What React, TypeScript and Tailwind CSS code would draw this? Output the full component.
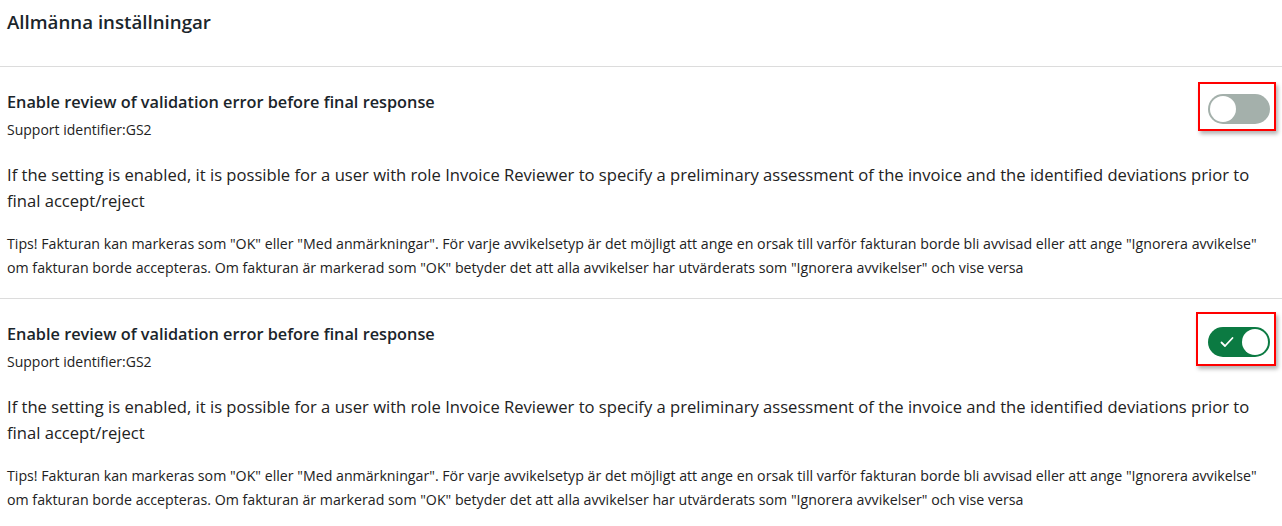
import React from "react";

const Toggle = ({ on }: { on: boolean }) => (
  <div
    className={
      on
        ? "flex h-[30px] w-[62px] items-center justify-between rounded-full bg-[#0b7a42] pl-[12px] pr-[2px]"
        : "flex h-[30px] w-[62px] items-center rounded-full bg-[#a4b0ab] pl-[2px]"
    }
  >
    {on && (
      <svg width="14" height="12" viewBox="0 0 14 12" fill="none">
        <path d="M1.5 6.5 L5 10 L12.5 2" stroke="white" strokeWidth="1.8" strokeLinecap="round" strokeLinejoin="round" />
      </svg>
    )}
    <div className="h-[26px] w-[26px] rounded-full bg-white" />
  </div>
);

const Setting = ({ on }: { on: boolean }) => (
  <div className="border-t border-[#dcdcdc] px-[7px] pt-[22px] pb-[18px]">
    <div className="flex justify-between">
      <div>
        <h2 className="text-[16.3px] font-semibold leading-[26px] text-[#1b252b]">
          Enable review of validation error before final response
        </h2>
        <p className="mt-[3px] text-[14px] leading-[24px] text-[#222]">Support identifier:GS2</p>
      </div>
      <div
        className={
          on
            ? "mt-[-9px] mr-[-1px] h-[54px] border-2 border-[#ff0000] pl-[10px] pr-[4px] pt-[13px] shadow-[2px_3px_4px_rgba(0,0,0,0.3)]"
            : "mt-[-7px] mr-[-1px] h-[49px] border-2 border-[#ff0000] pl-[8px] pr-[4px] pt-[10px] shadow-[2px_3px_4px_rgba(0,0,0,0.3)]"
        }
      >
        <Toggle on={on} />
      </div>
    </div>
    <p className="mt-[20px] text-[16.6px] leading-[26px] text-[#222]">
      If the setting is enabled, it is possible for a user with role Invoice Reviewer to specify a preliminary
      assessment of the invoice and the identified deviations prior to final accept/reject
    </p>
    <p className="mt-[18px] text-[14.2px] leading-[24px] text-[#222]">
      Tips! Fakturan kan markeras som "OK" eller "Med anmärkningar". För varje avvikelsetyp är det möjligt att ange
      en orsak till varför fakturan borde bli avvisad eller att ange "Ignorera avvikelse" om fakturan borde
      accepteras. Om fakturan är markerad som "OK" betyder det att alla avvikelser har utvärderats som "Ignorera
      avvikelser" och vise versa
    </p>
  </div>
);

export default function App() {
  return (
    <div className="min-h-screen bg-white font-['Open_Sans',sans-serif]">
      <div className="h-[66px] px-[7px] pt-[8px]">
        <h1 className="text-[18.7px] font-semibold leading-[28px] text-[#1b252b]">Allmänna inställningar</h1>
      </div>
      <Setting on={false} />
      <Setting on={true} />
    </div>
  );
}
